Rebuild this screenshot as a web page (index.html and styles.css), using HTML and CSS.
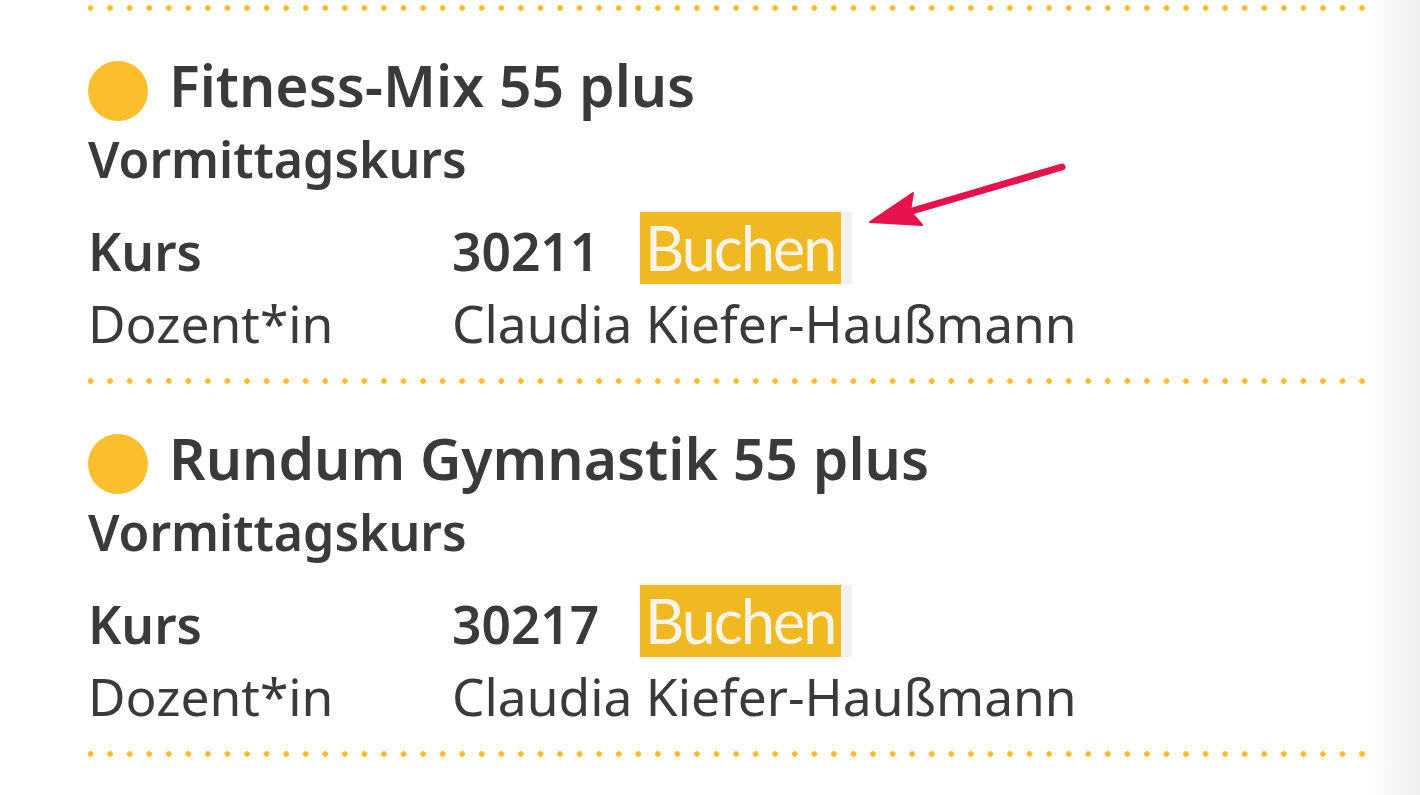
FILE: index.html
```html
<!DOCTYPE html>
<html lang="de">
<head>
<meta charset="utf-8">
<title>Kurse</title>
<link rel="stylesheet" href="styles.css">
</head>
<body>
<div class="page">
  <main class="content">
    <div class="divider"></div>
    <section class="course">
      <div class="course-head"><span class="bullet"></span><h2 class="course-title">Fitness-Mix 55 plus</h2></div>
      <p class="course-sub">Vormittagskurs</p>
      <dl class="course-info">
        <div class="info-row info-row--kurs"><dt>Kurs</dt><dd><span class="course-no">30211</span><a class="btn-book">Buchen</a></dd></div>
        <div class="info-row"><dt class="label-light">Dozent*in</dt><dd class="value-light">Claudia Kiefer-Haußmann</dd></div>
      </dl>
    </section>
    <div class="divider"></div>
    <section class="course">
      <div class="course-head"><span class="bullet"></span><h2 class="course-title">Rundum Gymnastik 55 plus</h2></div>
      <p class="course-sub">Vormittagskurs</p>
      <dl class="course-info">
        <div class="info-row info-row--kurs"><dt>Kurs</dt><dd><span class="course-no">30217</span><a class="btn-book">Buchen</a></dd></div>
        <div class="info-row"><dt class="label-light">Dozent*in</dt><dd class="value-light">Claudia Kiefer-Haußmann</dd></div>
      </dl>
    </section>
    <div class="divider"></div>
  </main>
  <div class="edge"></div>
</div>
<svg class="annot-arrow" width="210" height="90" viewBox="0 0 210 90" aria-hidden="true">
  <line x1="202" y1="17" x2="52" y2="61" stroke="#e5124b" stroke-width="7" stroke-linecap="round"/>
  <polygon points="10,72 53,43 50,61 62,75" fill="#e5124b" stroke="#e5124b" stroke-width="2" stroke-linejoin="round"/>
</svg>
</body>
</html>
```
FILE: styles.css
```css
html, body {
  margin: 0;
  padding: 0;
  background: #ffffff;
}
body {
  font-family: "Noto Sans", "Open Sans", sans-serif;
  color: #3a3a3a;
  overflow: hidden;
  height: 795px;
}
.page {
  display: flex;
  height: 795px;
}
.content {
  flex: 1;
  padding-left: 88px;
}
.edge {
  width: 55px;
  background: linear-gradient(to right, #ffffff, #efefef);
}
.divider {
  margin-top: 5px;
  height: 6px;
  background-image: radial-gradient(circle, #fbbd2c 2.5px, rgba(251,189,44,0) 3.1px);
  background-size: 19.57px 6px;
  background-position: -7.28px 0;
  background-repeat: repeat-x;
}
.course + .divider {
  margin-top: 0;
}
.course {
  padding-top: 45px;
  padding-bottom: 16px;
}
.course-head {
  display: flex;
  align-items: flex-start;
  height: 60px;
}
.bullet {
  width: 60px;
  height: 60px;
  margin-top: 5px;
  border-radius: 50%;
  background: #fbbf2d;
  flex: none;
}
.course-title {
  margin: -1px 0 0 21px;
  font-size: 57px;
  line-height: 60px;
  font-weight: 600;
}
.course-sub {
  margin: 0;
  font-size: 50px;
  line-height: 86px;
  font-weight: 600;
}
.course-info {
  margin: 10px 0 0;
}
.info-row {
  display: flex;
  align-items: baseline;
  font-size: 51.5px;
  line-height: 78px;
}
.info-row--kurs {
  line-height: 60px;
  font-weight: 600;
}
.info-row dt {
  width: 364px;
  flex: none;
}
.info-row dd {
  margin: 0;
  display: flex;
  align-items: baseline;
}
.course-no {
  width: 188px;
}
.btn-book {
  display: inline-block;
  font-family: Lato, "Noto Sans", sans-serif;
  font-weight: 400;
  font-size: 61px;
  line-height: 72px;
  letter-spacing: -2px;
  padding: 0 6px 0 5px;
  background: #f0b921;
  color: #f8f4ea;
  box-shadow: 11px 0 0 0 #f1f1f1, 0 0 0 2px #f8f8f8;
}
.annot-arrow {
  position: absolute;
  left: 860px;
  top: 150px;
}
```
